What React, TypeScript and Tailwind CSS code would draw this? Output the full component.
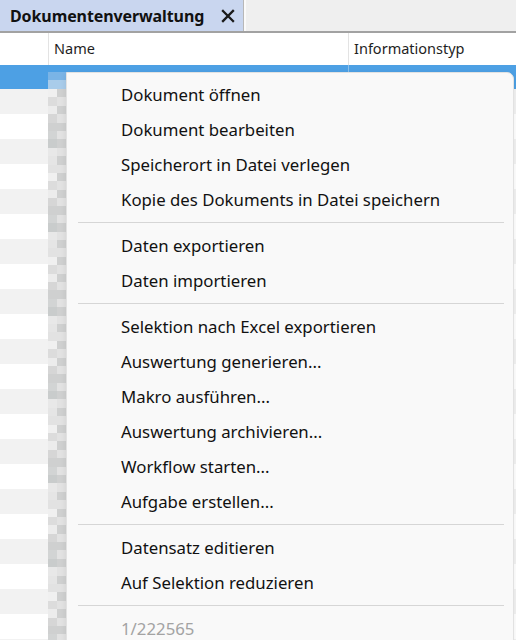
import React from "react";

const blockColors = [
  "bg-[#dcdcdc]", "bg-[#cfd0d0]", "bg-[#e8e8e8]", "bg-[#f0f0f0]", "bg-[#d6d6d6]",
  "bg-[#c9cccc]", "bg-[#e2e2e2]", "bg-[#ececec]", "bg-[#d2d4d4]", "bg-[#e5e5e5]",
];

const menuGroups: string[][] = [
  ["Dokument öffnen", "Dokument bearbeiten", "Speicherort in Datei verlegen", "Kopie des Dokuments in Datei speichern"],
  ["Daten exportieren", "Daten importieren"],
  ["Selektion nach Excel exportieren", "Auswertung generieren...", "Makro ausführen...", "Auswertung archivieren...", "Workflow starten...", "Aufgabe erstellen..."],
  ["Datensatz editieren", "Auf Selektion reduzieren"],
];

const rowCount = 23;

function PixelColumn() {
  const blocks: React.ReactNode[] = [];
  blocks.push(
    <div key="s0" className="flex h-[7px]"><div className="w-[9px] bg-[#4da0e4]" /><div className="w-[9px] bg-[#4da0e4]" /></div>,
    <div key="s1" className="flex h-[8px]"><div className="w-[9px] bg-[#7ab4e6]" /><div className="w-[9px] bg-[#7ab4e6]" /></div>,
    <div key="s2" className="flex h-[9px]"><div className="w-[9px] bg-[#a9ccea]" /><div className="w-[9px] bg-[#a9ccea]" /></div>
  );
  for (let i = 0; i < 66; i++) {
    const a = blockColors[(i * 7 + 3) % blockColors.length];
    const b = blockColors[(i * 5 + 1) % blockColors.length];
    blocks.push(
      <div key={i} className="flex h-[8.4px]">
        <div className={`w-[9px] ${a}`} />
        <div className={`w-[9px] ${b}`} />
      </div>
    );
  }
  return <div className="w-[18px] flex flex-col overflow-hidden">{blocks}</div>;
}

export default function App() {
  const rows = Array.from({ length: rowCount }, (_, i) => i);
  return (
    <div
      className="relative w-[516px] h-[640px] overflow-hidden bg-white"
      style={{ fontFamily: '"Noto Sans", "Open Sans", sans-serif' }}
    >
      {/* Tab bar */}
      <div className="h-[33px] bg-[#efefef] border-b-2 border-[#a2a2a2] flex">
        <div className="w-[244px] h-full bg-[#c9d6ef] border-r border-[#b8b8b8] flex items-center pl-[10px] pr-[8px]">
          <span className="text-[16px] font-bold text-[#111] tracking-[-0.1px]">Dokumentenverwaltung</span>
          <svg className="ml-auto" width="14" height="14" viewBox="0 0 14 14">
            <path d="M2 2 L12 12 M12 2 L2 12" stroke="#1a1a1a" strokeWidth="2.3" strokeLinecap="square" />
          </svg>
        </div>
        <div className="w-[2px] h-full bg-[#fafafa]" />
      </div>

      {/* Header */}
      <div className="h-[32px] flex text-[14.5px] text-[#1e1e1e] bg-white">
        <div className="w-[49px] border-r border-[#e3e3e3]" />
        <div className="w-[300px] border-r border-[#e3e3e3] flex items-center pl-[5px]">Name</div>
        <div className="flex-1 flex items-center pl-[5px]">Informationstyp</div>
      </div>

      {/* Body */}
      <div className="flex">
        <div className="w-[48px] flex flex-col">
          <div className="h-[24px] bg-[#4da0e4]" />
          {rows.map((i) => (
            <div key={i} className={`h-[25px] ${i % 2 === 0 ? "bg-[#f2f2f2]" : "bg-white"}`} />
          ))}
        </div>
        <PixelColumn />
        <div className="flex-1 flex flex-col">
          <div className="h-[24px] bg-[#4da0e4] flex text-[14px] text-white">
            <div className="w-[283px] border-r border-[#8cc0ea] flex items-center pl-[12px]">Wagner GmbH Bestellung</div>
            <div className="flex-1 flex items-center pl-[5px]">1000-3H</div>
          </div>
          {rows.map((i) => (
            <div key={i} className={`h-[25px] ${i % 2 === 0 ? "bg-[#f2f2f2]" : "bg-white"}`} />
          ))}
        </div>
      </div>

      {/* Context menu */}
      <div className="absolute left-[66px] top-[72px] w-[448px] h-[620px] bg-[#f9f9f9] border border-[#e2e2e2] rounded-tr-[7px] pt-[4px] shadow-[0_2px_6px_rgba(0,0,0,0.08)]">
        {menuGroups.map((group, gi) => (
          <div key={gi}>
            {group.map((item) => (
              <div key={item} className="h-[35px] flex items-center pl-[54px] text-[16.8px] text-[#111]">
                {item}
              </div>
            ))}
            <div className="h-[11px] flex items-center ml-[11px] mr-[9px]">
              <div className="h-px w-full bg-[#d6d6d6]" />
            </div>
          </div>
        ))}
        <div className="h-[35px] flex items-center pl-[54px] text-[16.8px] text-[#a3a3a3]">1/222565</div>
      </div>
    </div>
  );
}
